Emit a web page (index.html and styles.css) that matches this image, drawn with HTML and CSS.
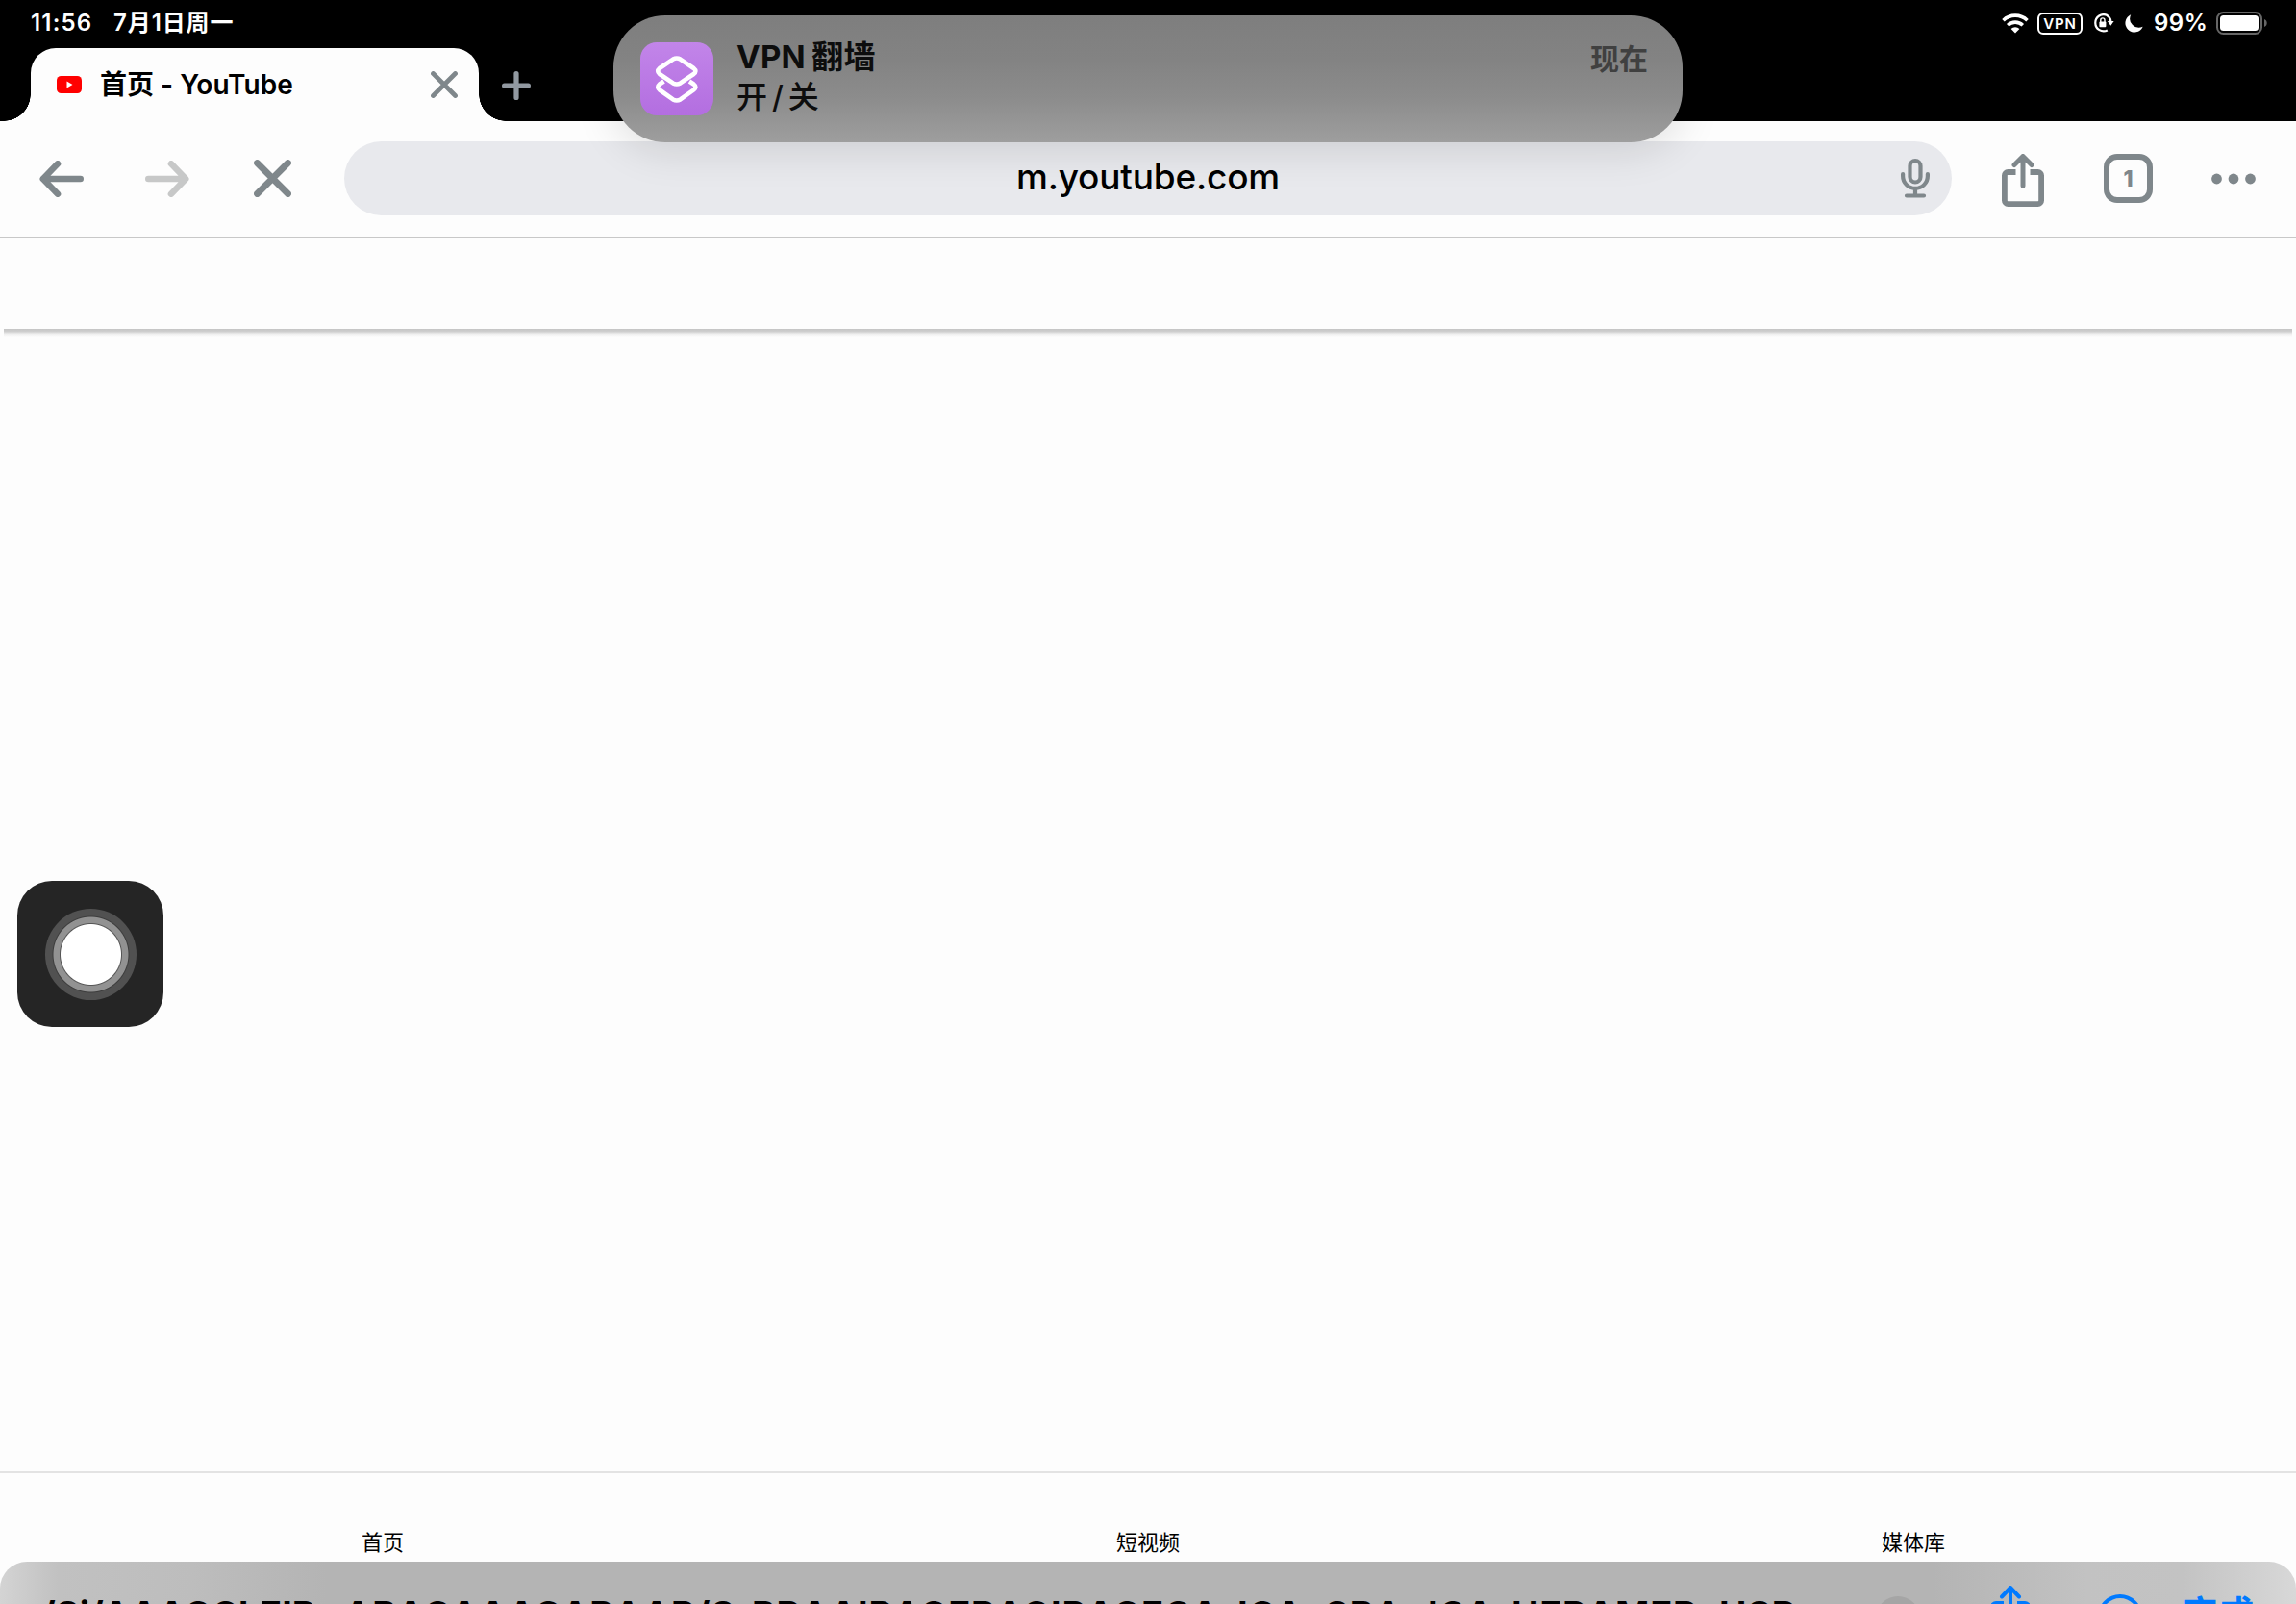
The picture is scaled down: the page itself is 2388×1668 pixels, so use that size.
FILE: index.html
```
<!DOCTYPE html>
<html lang="zh-CN">
<head>
<meta charset="utf-8">
<title>首页 - YouTube</title>
<link rel="stylesheet" href="styles.css">
</head>
<body>
<div class="screen">
  <header class="top">
    <div class="status">
      <span class="time">11:56</span>
      <span class="date">7月1日周一</span>
      <div class="indicators">
        <svg class="wifi" width="28" height="21" viewBox="0 0 28 21" fill="none" stroke="#fff" stroke-width="3.6"><path d="M1.5 7.2a18 18 0 0 1 25 0"/><path d="M6.2 12.2a11.3 11.3 0 0 1 15.6 0"/><path d="M14 20.5l-4.4-4.6a6.4 6.4 0 0 1 8.8 0z" fill="#fff" stroke="none"/></svg>
        <span class="vpn">VPN</span>
        <svg class="rotation" width="22" height="20" viewBox="0 0 22 20" fill="none"><path d="M14.6 2A8.6 8.6 0 1 0 14.8 17.4M14 1.8A8.6 8.6 0 0 1 18.4 8" stroke="#fff" stroke-width="2.2"/><path d="M14.8 8h6.8l-3.3 4.8z" fill="#fff"/><rect x="6.4" y="8.5" width="7" height="5.8" rx="1" fill="#fff"/><path d="M7.8 9V7a2.1 2.1 0 0 1 4.2 0v2" stroke="#fff" stroke-width="1.4"/></svg>
        <svg class="moon" width="19" height="19" viewBox="0 0 19 19"><path d="M6.2.3a9.5 9.5 0 1 0 12.5 12.4A9.3 9.3 0 0 1 6.2.3z" fill="#fff"/></svg>
        <span class="percent">99%</span>
        <svg class="battery" width="53" height="24" viewBox="0 0 53 24"><rect x="1" y="1" width="46" height="22" rx="6.5" fill="none" stroke="#666" stroke-width="2"/><rect x="4" y="4" width="40" height="16" rx="3.5" fill="#fff"/><path d="M50 8c3.6 1.2 3.6 6.800 0 8z" fill="#666"/></svg>
      </div>
    </div>
    <div class="tabs">
      <div class="tab">
        <svg class="favicon" width="26" height="18" viewBox="0 0 26 18"><rect width="26" height="18" rx="4.5" fill="#f00"/><path d="M10.500 5.500v7l6-3.500z" fill="#fff"/></svg>
        <span class="tab-title">首页 - YouTube</span>
        <svg class="tab-close" width="28" height="28" viewBox="0 0 28 28" stroke="#7f878b" stroke-width="4.8" stroke-linecap="round"><path d="M2.500 2.500l23 23M25.500 2.500l-23 23"/></svg>
      </div>
      <svg class="plus" width="30" height="30" viewBox="0 0 30 30" stroke="#9299a1" stroke-width="5.200" stroke-linecap="round"><path d="M15 2.600v24.800M2.600 15h24.800"/></svg>
    </div>
  </header>

  <div class="toolbar">
    <svg class="back" width="46" height="38" viewBox="0 0 46 38" fill="none" stroke="#7f878b" stroke-width="6.600" stroke-linecap="round" stroke-linejoin="round"><path d="M19 3.300L3.800 19 19 34.700M4 19h38.700"/></svg>
    <svg class="forward" width="46" height="38" viewBox="0 0 46 38" fill="none" stroke="#c7c8c8" stroke-width="6.600" stroke-linecap="round" stroke-linejoin="round"><path d="M27 3.300L42.200 19 27 34.700M42 19H3.300"/></svg>
    <svg class="stop" width="39" height="39" viewBox="0 0 39 39" stroke="#7f878b" stroke-width="6.800" stroke-linecap="round"><path d="M3.500 3.500l32 32M35.500 3.500l-32 32"/></svg>
    <div class="omnibox">
      <span class="url">m.youtube.com</span>
      <svg class="mic" width="30" height="41" viewBox="0 0 30 41" fill="none" stroke="#7f878b" stroke-width="4.200" stroke-linecap="round"><rect x="9.500" y="2.100" width="11" height="22.400" rx="5.500"/><path d="M2.100 16v2a12.900 12.900 0 0 0 25.800 0v-2M15 31v7M6 38.500h18"/></svg>
    </div>
    <svg class="share" width="44" height="55" viewBox="0 0 44 55" fill="none" stroke="#7f878b" stroke-width="5.800"><path d="M14.500 19H6.500a3.600 3.600 0 0 0-3.600 3.700v25.800a3.600 3.600 0 0 0 3.600 3.600h31a3.600 3.600 0 0 0 3.600-3.600V22.700a3.600 3.600 0 0 0-3.600-3.700h-8"/><path d="M22 33V4M13 11.500L22 2.500l9 9" stroke-width="5" stroke-linecap="round" stroke-linejoin="round"/></svg>
    <div class="tab-count">1</div>
    <svg class="more" width="46" height="12" viewBox="0 0 46 12" fill="#7f878b"><circle cx="5.500" cy="6" r="5.400"/><circle cx="23" cy="6" r="5.400"/><circle cx="40.500" cy="6" r="5.400"/></svg>
  </div>

  <main class="page">
    <div class="masthead"></div>
  </main>

  <nav class="bottom-nav">
    <span>首页</span><span>短视频</span><span>媒体库</span>
  </nav>

  <footer class="sheet">
    <div class="sheet-title">
      <span class="w1">/Si/AAAGCkEIRa</span><span class="w2">ABAGAAAGABAAR/Sa</span><span class="w3">PRAAIRAGEBAGIRAGEGA</span><span class="w4">IGAa</span><span class="w5">SBAa</span><span class="w6">IGAa</span><span class="w7">HERAMERa</span><span class="w8">HSR</span>
    </div>
    <svg class="sheet-dot" width="46" height="46" viewBox="0 0 46 46"><circle cx="23" cy="23" r="23" fill="#a5a5a5"/></svg>
    <svg class="sheet-share" width="42" height="56" viewBox="0 0 42 56" fill="none" stroke="#007aff" stroke-width="4"><path d="M14 18H6a4 4 0 0 0-4 4v28a4 4 0 0 0 4 4h30a4 4 0 0 0 4-4V22a4 4 0 0 0-4-4h-8"/><path d="M21 36V3M12 11.500l9-9.500 9 9.500" stroke-linecap="round" stroke-linejoin="round"/></svg>
    <svg class="sheet-compass" width="46" height="46" viewBox="0 0 46 46" fill="none" stroke="#007aff" stroke-width="4"><circle cx="23" cy="23" r="21"/><path d="M32 14l-5.500 12.500L14 32l5.500-12.500z" fill="#007aff" stroke="none"/></svg>
    <span class="done">完成</span>
  </footer>

  <div class="notice">
    <svg class="app" width="76" height="76" viewBox="0 0 76 76" fill="none"><defs><linearGradient id="purple" x1="0" y1="0" x2="0" y2="1"><stop offset="0" stop-color="#c285e9"/><stop offset="1" stop-color="#b36ee0"/></linearGradient></defs><rect width="76" height="76" rx="17" fill="url(#purple)"/><g stroke="#fff" stroke-width="4.600" stroke-linejoin="round"><path d="M34 17.600q3.800-2.200 7.600 0L55.500 27q3.800 3 0 6L41.600 42.400q-3.800 2.200-7.600 0L20 33q-3.600-3 0-6z"/><path d="M24.500 40.500L20 43.500q-3.600 3 0 6L34 59.400q3.800 2.200 7.600 0L55.500 49.500q3.800-3 0-6L51 40.500"/></g></svg>
    <div class="notice-text">
      <div class="notice-title"><span>VPN</span><span>翻墙</span></div>
      <div class="notice-body"><span>开</span><span>/</span><span>关</span></div>
    </div>
    <span class="notice-time">现在</span>
  </div>

  <div class="assistive"><div class="ring"></div></div>
</div>
</body>
</html>
```
FILE: styles.css
```
* { box-sizing: border-box; }
body {
  margin: 0;
  background: #fdfdfd;
  font-family: Inter, "Noto Sans CJK SC", sans-serif;
  color: #000;
}
svg { display: block; flex: none; }
span { white-space: nowrap; }
.screen {
  position: relative;
  width: 2388px;
  height: 1668px;
  overflow: hidden;
  display: flex;
  flex-direction: column;
}

/* status bar and tab strip */
.top { height: 126px; background: #000; flex: none; }
.status {
  height: 50px;
  display: flex;
  align-items: center;
  padding: 0 30px 2px 32px;
  color: #fff;
  font-size: 24px;
  font-weight: 600;
  line-height: 48px;
}
.time { width: 86px; letter-spacing: 1.2px; }
.date { font-weight: 600; letter-spacing: .9px; }
.indicators { margin-left: auto; display: flex; align-items: center; }
.wifi { margin-right: 9px; }
.vpn {
  width: 47px;
  height: 23px;
  border: 2px solid #fff;
  border-radius: 6px;
  font-size: 15px;
  line-height: 19px;
  text-align: center;
  letter-spacing: .8px;
  margin-right: 11px;
}
.rotation { margin-right: 11px; }
.moon { margin-right: 11px; }
.percent { width: 65px; letter-spacing: .5px; }
.tabs { height: 76px; display: flex; padding-left: 32px; }
.tab {
  position: relative;
  width: 466px;
  height: 76px;
  background: #fdfdfd;
  border-radius: 26px 26px 0 0;
  display: flex;
  align-items: center;
  padding: 0 22px 0 27px;
}
.tab::before, .tab::after {
  content: "";
  position: absolute;
  bottom: 0;
  width: 28px;
  height: 28px;
}
.tab::before { left: -28px; background: radial-gradient(circle at 0 0, #000 27.500px, #fdfdfd 28px); }
.tab::after { right: -28px; background: radial-gradient(circle at 100% 0, #000 27.500px, #fdfdfd 28px); }
.tab-title { margin-left: 19px; font-size: 28px; font-weight: 600; line-height: 40px; }
.tab-close { margin-left: auto; }
.plus { margin: 24px 0 0 24px; }

/* browser toolbar */
.toolbar {
  height: 121px;
  flex: none;
  border-bottom: 1px solid #c8c8c8;
  display: flex;
  align-items: center;
  padding: 0 41px 1px;
}
.forward { margin-left: 64px; }
.stop { margin-left: 67px; }
.omnibox {
  width: 1672px;
  height: 77px;
  margin-left: 55px;
  border-radius: 39px;
  background: #e8e9ed;
  display: flex;
  align-items: center;
  justify-content: flex-end;
  padding-right: 23px;
}
.url { flex: 1; padding-left: 53px; text-align: center; font-size: 37px; font-weight: 500; line-height: 60px; letter-spacing: -.2px; margin-top: -4px; }
.share { margin: 3px 0 0 52px; }
.tab-count {
  width: 51px;
  height: 51px;
  margin-left: 62px;
  border: 6px solid #7f878b;
  border-radius: 14px;
  color: #7f878b;
  font-size: 23px;
  font-weight: 800;
  line-height: 40px;
  text-align: center;
}
.more { margin-left: 61px; }

/* page */
.page { height: 1283px; flex: none; }
.masthead { height: 95px; margin: 0 4px; position: relative; }
.masthead::after {
  content: "";
  position: absolute;
  left: 0;
  right: 0;
  top: 95px;
  height: 8px;
  background: linear-gradient(#c5c5c5, #cfcfcf 35%, #efefef 65%, #fdfdfd);
}
.bottom-nav {
  height: 94px;
  flex: none;
  border-top: 2px solid #e3e3e3;
  display: grid;
  grid-template-columns: repeat(3, 1fr);
  text-align: center;
  font-size: 22px;
  line-height: 32px;
  padding-top: 56px;
}

/* lower sheet, mostly below the screen edge */
.sheet {
  height: 44px;
  flex: none;
  overflow: hidden;
  border-radius: 28px 28px 0 0;
  background: linear-gradient(90deg, #d4d4d4, #cbcbcb 28px, #c1c1c1 60px, #bdbdbd 200px, #b4b4b4 340px, #b4b4b4 2010px, #c2c2c2 2170px, #c3c3c3 2270px, #d8d8d8 2388px);
  display: flex;
  align-items: flex-start;
}
.sheet-title {
  width: 1951px;
  padding: 27px 0 0 43px;
  display: flex;
  font-size: 38px;
  font-weight: 700;
  line-height: 56px;
  letter-spacing: .8px;
}
.sheet-title span { flex: none; }
.w1 { width: 315px; letter-spacing: 0; }
.w2 { width: 424px; }
.w3 { width: 505px; }
.w4 { width: 91px; }
.w5 { width: 107px; }
.w6 { width: 87px; }
.w7 { width: 216px; }
.sheet-dot { margin-top: 36px; }
.sheet-share { margin: 25px 0 0 73px; }
.sheet-compass { margin: 34px 0 0 70px; }
.done { margin: 29px 0 0 42px; font-size: 37px; font-weight: 600; line-height: 52px; color: #007aff; }

/* notification banner */
.notice {
  position: absolute;
  left: 638px;
  top: 16px;
  width: 1112px;
  height: 132px;
  border-radius: 54px;
  background: linear-gradient(#7e7e7e, #838383 35%, #8c8c8c 65%, #9e9e9e);
  box-shadow: 0 8px 44px rgba(0, 0, 0, .12);
  display: flex;
  align-items: flex-start;
  padding: 28px 36px 0 28px;
  color: #0d0d0d;
}
.notice-text { margin: -5px 0 0 24px; font-size: 32px; line-height: 41px; }
.notice-title, .notice-body { display: flex; height: 41px; }
.notice-title { font-weight: 700; gap: 6px; font-size: 33px; letter-spacing: .3px; }
.notice-body { font-weight: 500; gap: 5px; }
.notice-time { margin: -3px 0 0 auto; font-size: 30px; font-weight: 600; line-height: 40px; color: #404040; }

/* floating assistive button */
.assistive {
  position: absolute;
  left: 18px;
  top: 916px;
  width: 152px;
  height: 152px;
  border-radius: 36px;
  background: #252525;
  display: grid;
  place-items: center;
}
.ring {
  width: 95px;
  height: 95px;
  border-radius: 50%;
  background: radial-gradient(circle, #fff 31px, #555 32px, #929292 33px, #929292 38.500px, #3c3c3c 39.500px, #515151 40.500px);
}
```
